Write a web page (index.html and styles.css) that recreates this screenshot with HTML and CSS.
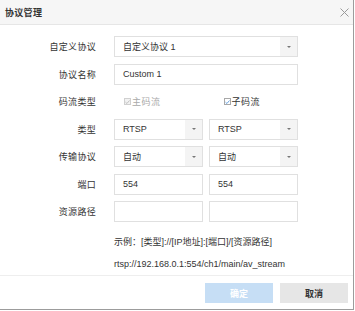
FILE: index.html
```html
<!DOCTYPE html>
<html lang="zh-CN">
<head>
<meta charset="UTF-8">
<title>协议管理</title>
<link rel="stylesheet" href="styles.css">
</head>
<body>
<div class="dialog">
  <div class="dialog-header">
    <span class="dialog-title">协议管理</span>
    <svg class="close-icon" width="9" height="9" viewBox="0 0 9 9">
      <path d="M0.5 0.5 L8.5 8.5 M8.5 0.5 L0.5 8.5" stroke="#9a9a9a" stroke-width="1" fill="none"/>
    </svg>
  </div>

  <div class="dialog-body">
    <div class="form-row">
      <label class="form-label">自定义协议</label>
      <div class="field">
        <div class="select"><span>自定义协议 1</span><i class="select-arrow"></i></div>
      </div>
    </div>

    <div class="form-row">
      <label class="form-label">协议名称</label>
      <div class="field">
        <div class="input">Custom 1</div>
      </div>
    </div>

    <div class="form-row">
      <label class="form-label">码流类型</label>
      <div class="field split">
        <div class="check-wrap main-stream">
          <span class="checkbox disabled"><svg width="6" height="6" viewBox="0 0 6 6"><path d="M0.6 3.2 L2.3 4.8 L5.4 1.2" stroke="#b5b5b5" stroke-width="1" fill="none"/></svg></span>
          <span class="check-text disabled">主码流</span>
        </div>
        <div class="check-wrap sub-stream">
          <span class="checkbox"><svg width="6" height="6" viewBox="0 0 6 6"><path d="M0.6 3.2 L2.3 4.8 L5.4 1.2" stroke="#4a8fd6" stroke-width="1" fill="none"/></svg></span>
          <span class="check-text">子码流</span>
        </div>
      </div>
    </div>

    <div class="form-row">
      <label class="form-label">类型</label>
      <div class="field split">
        <div class="select"><span>RTSP</span><i class="select-arrow"></i></div>
        <div class="select"><span>RTSP</span><i class="select-arrow"></i></div>
      </div>
    </div>

    <div class="form-row">
      <label class="form-label">传输协议</label>
      <div class="field split">
        <div class="select"><span>自动</span><i class="select-arrow"></i></div>
        <div class="select"><span>自动</span><i class="select-arrow"></i></div>
      </div>
    </div>

    <div class="form-row">
      <label class="form-label">端口</label>
      <div class="field split">
        <div class="input">554</div>
        <div class="input">554</div>
      </div>
    </div>

    <div class="form-row">
      <label class="form-label">资源路径</label>
      <div class="field split">
        <div class="input"></div>
        <div class="input"></div>
      </div>
    </div>

    <div class="note">
      <div>示例：[类型]://[IP地址]:[端口]/[资源路径]</div>
      <div>rtsp://192.168.0.1:554/ch1/main/av_stream</div>
    </div>
  </div>

  <div class="dialog-footer">
    <button class="btn btn-ok">确定</button>
    <button class="btn btn-cancel">取消</button>
  </div>
</div>
</body>
</html>
```

FILE: styles.css
```css
body {
  margin: 0;
  padding: 0;
  background-color: white;
  font-family: "Liberation Sans", "Noto Sans CJK SC", sans-serif;
  font-size: 9px;
  color: #333;
}

.dialog {
  box-sizing: border-box;
  width: 354px;
  height: 310px;
  border-right: 1px solid #9c9c9c;
  border-bottom: 1px solid #9c9c9c;
  display: flex;
  flex-direction: column;
}

.dialog-header {
  height: 24px;
  border-bottom: 1px solid #e6e6e6;
  background-color: #f6f6f6;
  display: flex;
  align-items: center;
  justify-content: space-between;
  padding: 0 4px 0 5px;
}

.dialog-title {
  font-weight: bold;
  letter-spacing: 0.3px;
}

.dialog-body {
  flex: 1;
  padding-top: 11px;
  display: flex;
  flex-direction: column;
  gap: 6.5px;
}

.form-row {
  display: flex;
  align-items: center;
  height: 21px;
}

.form-label {
  width: 96px;
  text-align: right;
  letter-spacing: 0.3px;
}

.field {
  margin-left: 18px;
  width: 184px;
  height: 21px;
  display: flex;
}

.field.split {
  gap: 6px;
}

.field.split > * {
  flex: 1;
}

.select,
.input {
  box-sizing: border-box;
  height: 21px;
  border: 1px solid #e0e0e0;
  background-color: white;
  display: flex;
  align-items: center;
  padding-left: 8px;
  width: 100%;
}

.select span {
  flex: 1;
}

.select-arrow {
  width: 17px;
  align-self: stretch;
  background-color: #f4f4f4;
  display: flex;
  align-items: center;
  justify-content: center;
}

.select-arrow::after {
  content: "";
  border-left: 2px solid transparent;
  border-right: 2px solid transparent;
  border-top: 2px solid #777;
}

.check-wrap {
  display: flex;
  align-items: center;
}

.main-stream {
  padding-left: 10px;
}

.sub-stream {
  padding-left: 19px;
}

.checkbox {
  box-sizing: border-box;
  width: 7px;
  height: 7px;
  border: 1px solid #a8a8a8;
  background-color: white;
  display: flex;
  align-items: center;
  justify-content: center;
  margin-right: 1px;
}

.checkbox.disabled {
  border-color: #d0d0d0;
  background-color: #f2f2f2;
}

.check-text {
  letter-spacing: 0.5px;
}

.check-text.disabled {
  color: #a9a9a9;
}

.note {
  margin-left: 114px;
  margin-top: 2.5px;
  line-height: 22px;
}

.dialog-footer {
  border-top: 1px solid #eeeeee;
  padding: 7px 5px 0 0;
  height: 34px;
  box-sizing: border-box;
  display: flex;
  justify-content: flex-end;
  gap: 7px;
}

.btn {
  width: 68px;
  height: 20px;
  border: none;
  font-family: inherit;
  font-size: 9px;
  font-weight: bold;
  padding: 0;
}

.btn-ok {
  background-color: #c6def5;
  color: white;
}

.btn-cancel {
  background-color: #e6e6e6;
  color: #333;
}
```
